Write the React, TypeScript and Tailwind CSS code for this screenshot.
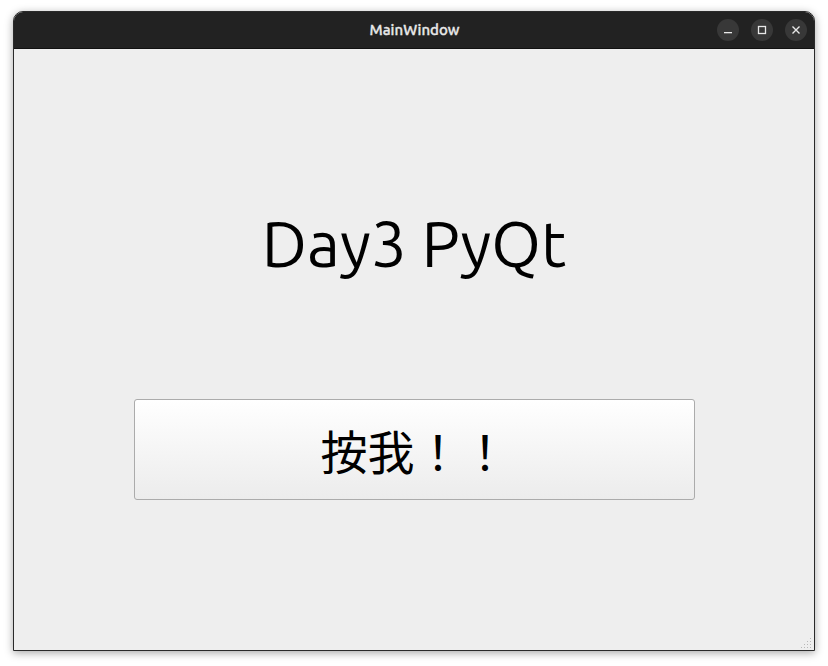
import React from "react";

export default function App() {
  return (
    <div className="w-[828px] h-[666px] bg-white relative overflow-hidden">
      <div className="absolute left-[13px] top-[11px] w-[802px] h-[640px] flex flex-col rounded-t-[10px] shadow-[0_2px_8px_rgba(0,0,0,0.35)] border border-[#2a2a2a] bg-[#eeeeee] overflow-hidden">
        {/* Title bar */}
        <div className="h-[37px] bg-[#222222] flex items-center relative border-b border-[#111]">
          <div className="flex-1 text-center text-[15px] font-medium text-[#e8e8e8] pl-[1px] [-webkit-text-stroke:0.35px_#e8e8e8]" style={{ fontFamily: "Ubuntu, 'Noto Sans', 'Open Sans', sans-serif" }}>
            MainWindow
          </div>
          <div className="absolute right-[7px] top-[7px] flex gap-[12px]">
            <div className="w-[22px] h-[22px] rounded-full bg-[#383838] flex items-center justify-center">
              <svg width="10" height="10" viewBox="0 0 10 10"><rect x="1" y="7" width="8" height="1.3" fill="#e8e8e8" /></svg>
            </div>
            <div className="w-[22px] h-[22px] rounded-full bg-[#383838] flex items-center justify-center">
              <svg width="10" height="10" viewBox="0 0 10 10"><rect x="1.5" y="1.5" width="7" height="7" fill="none" stroke="#e8e8e8" strokeWidth="1.3" /></svg>
            </div>
            <div className="w-[22px] h-[22px] rounded-full bg-[#383838] flex items-center justify-center">
              <svg width="10" height="10" viewBox="0 0 10 10"><path d="M1.5 1.5 L8.5 8.5 M8.5 1.5 L1.5 8.5" stroke="#e8e8e8" strokeWidth="1.4" /></svg>
            </div>
          </div>
        </div>
        {/* Content */}
        <div className="flex-1 flex flex-col items-center relative">
          <div className="mt-[151px] h-[86px] flex items-center text-[64px] text-black leading-none" style={{ fontFamily: "Ubuntu, 'Open Sans', 'Noto Sans', sans-serif" }}>
            Day3 PyQt
          </div>
          <div className="mt-[113px] ml-[1px] w-[561px] h-[101px] border border-[#ababab] rounded-[3px] bg-gradient-to-b from-[#ffffff] to-[#ececec] flex items-center justify-center text-[47px] text-black" style={{ fontFamily: "'Noto Sans CJK JP', 'Noto Sans CJK SC', sans-serif" }}>
            <span className="pt-[2px]">按我！！</span>
          </div>
          <svg className="absolute right-[1px] bottom-[1px]" width="12" height="12" viewBox="0 0 12 12">
            <g fill="#b8b8b8">
              <rect x="9" y="1" width="1" height="1" />
              <rect x="6" y="4" width="1" height="1" />
              <rect x="9" y="4" width="1" height="1" />
              <rect x="3" y="7" width="1" height="1" />
              <rect x="6" y="7" width="1" height="1" />
              <rect x="9" y="7" width="1" height="1" />
              <rect x="0" y="10" width="1" height="1" />
              <rect x="3" y="10" width="1" height="1" />
              <rect x="6" y="10" width="1" height="1" />
              <rect x="9" y="10" width="1" height="1" />
            </g>
          </svg>
        </div>
      </div>
    </div>
  );
}
